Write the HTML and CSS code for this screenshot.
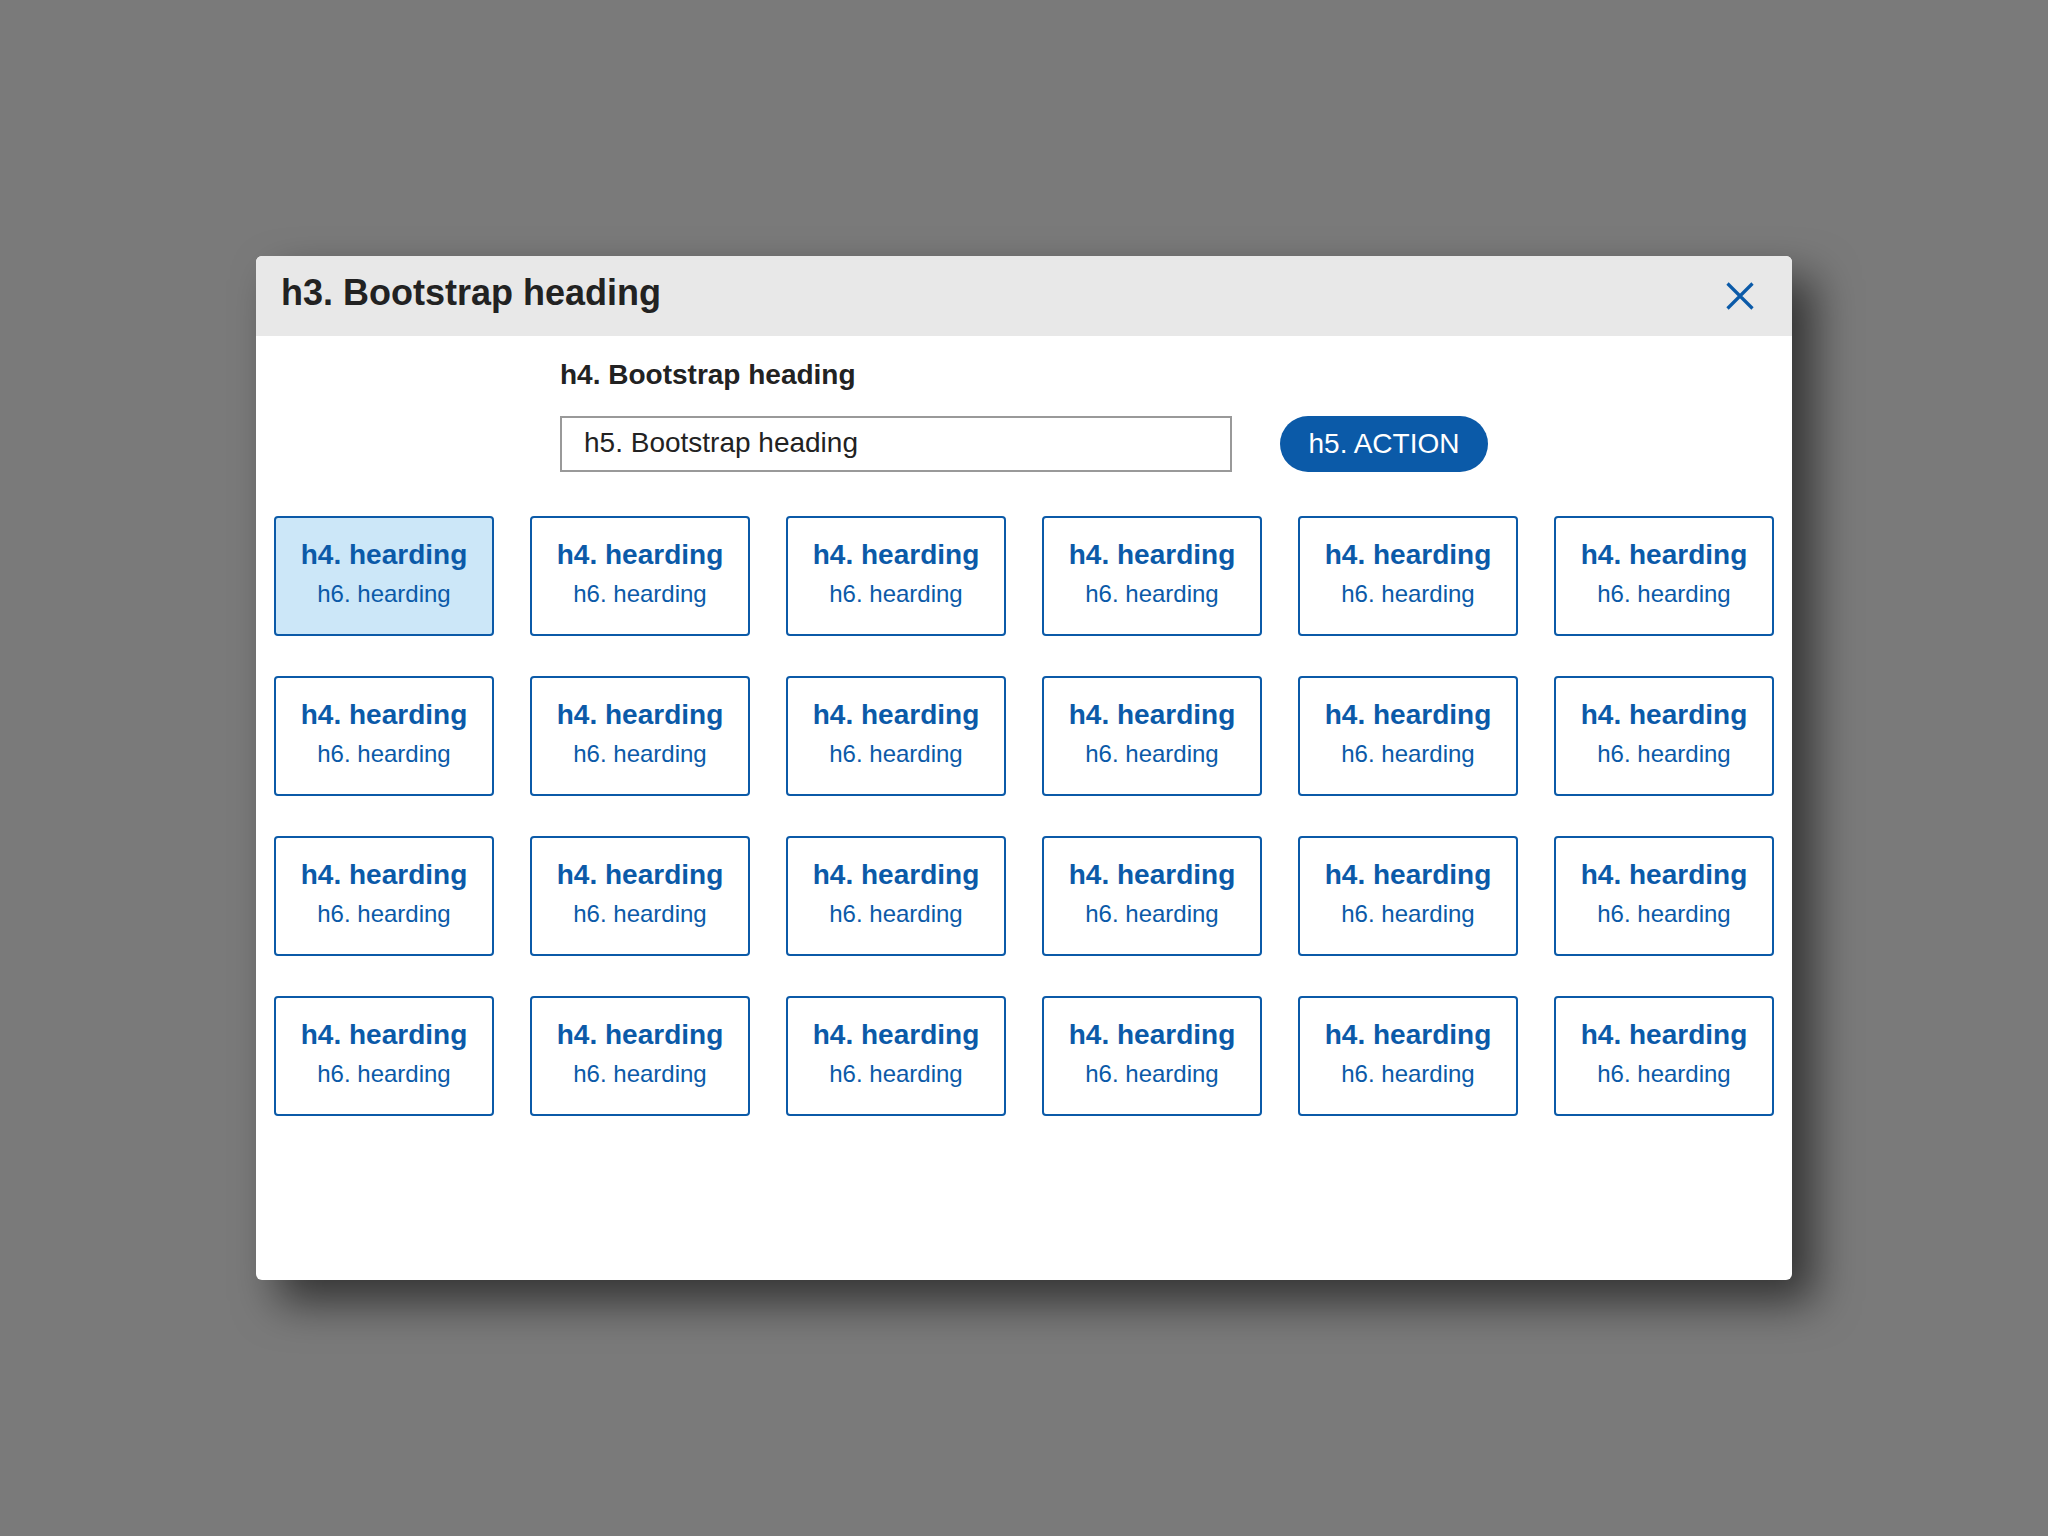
FILE: index.html
```html
<!DOCTYPE html>
<html lang="en">
<head>
<meta charset="utf-8">
<title>Modal</title>
<link rel="stylesheet" href="styles.css">
</head>
<body>
<div class="modal">
  <div class="modal-header">
    <h3 class="modal-title">h3. Bootstrap heading</h3>
    <button class="close" aria-label="Close">
      <svg width="28" height="28" viewBox="0 0 28 28"><path d="M1.5 1.5 L26.5 26.5 M26.5 1.5 L1.5 26.5" stroke="#0b5aa8" stroke-width="3.2" fill="none"/></svg>
    </button>
  </div>
  <div class="modal-body">
    <div class="form">
      <h4 class="form-title">h4. Bootstrap heading</h4>
      <div class="form-row">
        <div class="input">h5. Bootstrap heading</div>
        <button class="action">h5. ACTION</button>
      </div>
    </div>
    <div class="grid">
      <div class="card selected"><div class="c-title">h4. hearding</div><div class="c-sub">h6. hearding</div></div>
      <div class="card"><div class="c-title">h4. hearding</div><div class="c-sub">h6. hearding</div></div>
      <div class="card"><div class="c-title">h4. hearding</div><div class="c-sub">h6. hearding</div></div>
      <div class="card"><div class="c-title">h4. hearding</div><div class="c-sub">h6. hearding</div></div>
      <div class="card"><div class="c-title">h4. hearding</div><div class="c-sub">h6. hearding</div></div>
      <div class="card"><div class="c-title">h4. hearding</div><div class="c-sub">h6. hearding</div></div>
      <div class="card"><div class="c-title">h4. hearding</div><div class="c-sub">h6. hearding</div></div>
      <div class="card"><div class="c-title">h4. hearding</div><div class="c-sub">h6. hearding</div></div>
      <div class="card"><div class="c-title">h4. hearding</div><div class="c-sub">h6. hearding</div></div>
      <div class="card"><div class="c-title">h4. hearding</div><div class="c-sub">h6. hearding</div></div>
      <div class="card"><div class="c-title">h4. hearding</div><div class="c-sub">h6. hearding</div></div>
      <div class="card"><div class="c-title">h4. hearding</div><div class="c-sub">h6. hearding</div></div>
      <div class="card"><div class="c-title">h4. hearding</div><div class="c-sub">h6. hearding</div></div>
      <div class="card"><div class="c-title">h4. hearding</div><div class="c-sub">h6. hearding</div></div>
      <div class="card"><div class="c-title">h4. hearding</div><div class="c-sub">h6. hearding</div></div>
      <div class="card"><div class="c-title">h4. hearding</div><div class="c-sub">h6. hearding</div></div>
      <div class="card"><div class="c-title">h4. hearding</div><div class="c-sub">h6. hearding</div></div>
      <div class="card"><div class="c-title">h4. hearding</div><div class="c-sub">h6. hearding</div></div>
      <div class="card"><div class="c-title">h4. hearding</div><div class="c-sub">h6. hearding</div></div>
      <div class="card"><div class="c-title">h4. hearding</div><div class="c-sub">h6. hearding</div></div>
      <div class="card"><div class="c-title">h4. hearding</div><div class="c-sub">h6. hearding</div></div>
      <div class="card"><div class="c-title">h4. hearding</div><div class="c-sub">h6. hearding</div></div>
      <div class="card"><div class="c-title">h4. hearding</div><div class="c-sub">h6. hearding</div></div>
      <div class="card"><div class="c-title">h4. hearding</div><div class="c-sub">h6. hearding</div></div>
    </div>
  </div>
</div>
</body>
</html>
```

FILE: styles.css
```css
* { box-sizing: border-box; }

html, body {
  margin: 0;
  padding: 0;
}

body {
  background: #7a7a7a;
  font-family: "Liberation Sans", Arial, sans-serif;
  min-height: 100vh;
  display: flex;
  align-items: center;
  justify-content: center;
}

.modal {
  width: 1536px;
  height: 1024px;
  background: #ffffff;
  border-radius: 6px;
  box-shadow: 22px 22px 44px rgba(0, 0, 0, 0.58);
  overflow: hidden;
  display: flex;
  flex-direction: column;
}

.modal-header {
  height: 80px;
  flex: none;
  background: #e8e8e8;
  display: flex;
  align-items: flex-start;
  justify-content: space-between;
  padding: 15px 38px 0 25px;
}

.modal-title {
  margin: 0;
  font-size: 36px;
  line-height: 44px;
  font-weight: 700;
  color: #222222;
}

.close {
  margin-top: 11px;
  padding: 0;
  border: 0;
  background: transparent;
  width: 28px;
  height: 28px;
  display: block;
}

.close svg { display: block; }

.modal-body {
  padding: 23px 18px 0 18px;
}

.form {
  width: 928px;
  margin: 0 auto;
}

.form-title {
  margin: 0;
  font-size: 28px;
  line-height: 32px;
  font-weight: 700;
  color: #222222;
}

.form-row {
  margin-top: 25px;
  display: flex;
  gap: 48px;
}

.input {
  width: 672px;
  height: 56px;
  border: 2px solid #999999;
  padding: 0 0 2px 22px;
  display: flex;
  align-items: center;
  font-size: 28px;
  color: #222222;
}

.action {
  width: 208px;
  height: 56px;
  border: 0;
  border-radius: 28px;
  background: #0b5aa8;
  color: #ffffff;
  font-family: "Liberation Sans", Arial, sans-serif;
  font-size: 28px;
  padding: 0;
}

.grid {
  margin-top: 44px;
  display: grid;
  grid-template-columns: repeat(6, 220px);
  column-gap: 36px;
  row-gap: 40px;
}

.card {
  height: 120px;
  border: 2px solid #0b5aa8;
  border-radius: 4px;
  padding-top: 18px;
  text-align: center;
  color: #0b5aa8;
  background: #ffffff;
}

.card.selected {
  background: #cce7f8;
}

.c-title {
  font-size: 28px;
  line-height: 38px;
  font-weight: 700;
}

.c-sub {
  margin-top: 4px;
  font-size: 24px;
  line-height: 32px;
}
```
